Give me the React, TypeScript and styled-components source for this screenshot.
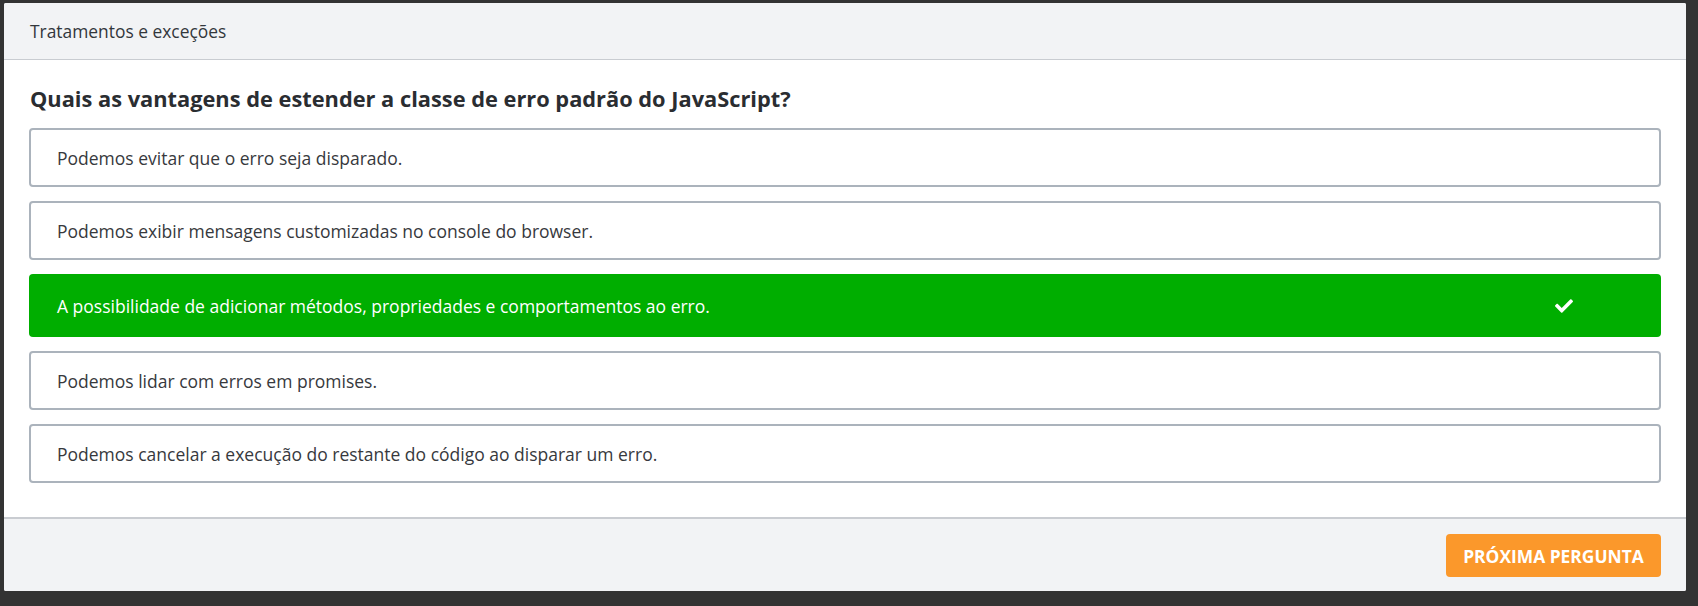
import React from "react";
import styled, { createGlobalStyle } from "styled-components";

const Global = createGlobalStyle`
  html, body { margin: 0; padding: 0; background: #333333; }
  body { font-family: "Open Sans", "Noto Sans", sans-serif; }
  * { box-sizing: border-box; }
`;

const Page = styled.div`
  padding: 3px 12px 15px 4px;
  width: 1698px;
  height: 606px;
`;

const Card = styled.div`
  background: #ffffff;
  border-radius: 2px;
  overflow: hidden;
  display: flex;
  flex-direction: column;
`;

const Header = styled.div`
  height: 57px;
  background: #f2f3f5;
  border-bottom: 1px solid #c9ccd1;
  display: flex;
  align-items: center;
  padding: 0 26px;
  font-size: 17.4px;
  color: #33373c;
`;

const Body = styled.div`
  padding: 23px 25px 34px 25px;
  display: flex;
  flex-direction: column;
`;

const Question = styled.h2`
  margin: 0 0 14px 1px;
  font-size: 21.8px;
  font-weight: 700;
  color: #2a2d31;
  line-height: 31px;
`;

const Options = styled.div`
  display: flex;
  flex-direction: column;
  gap: 14px;
`;

const Option = styled.div<{ $correct?: boolean }>`
  height: ${(p) => (p.$correct ? "63px" : "59px")};
  border-radius: 4px;
  border: ${(p) => (p.$correct ? "none" : "2px solid #abb3bc")};
  background: ${(p) => (p.$correct ? "#00ae00" : "#ffffff")};
  color: ${(p) => (p.$correct ? "#ffffff" : "#37393d")};
  display: flex;
  align-items: center;
  justify-content: space-between;
  padding: 0 88px 0 ${(p) => (p.$correct ? "28px" : "26px")};
  font-size: 17.5px;
`;

const CheckIcon = styled.svg`
  width: 18px;
  height: 14px;
  fill: #ffffff;
`;

const Footer = styled.div`
  height: 74px;
  background: #f2f3f5;
  border-top: 2px solid #c9ccd1;
  display: flex;
  align-items: center;
  justify-content: flex-end;
  padding: 0 25px;
`;

const NextButton = styled.button`
  height: 43px;
  width: 215px;
  border: none;
  border-radius: 4px;
  background: #fb982b;
  color: #ffffff;
  font-family: "Open Sans", "Noto Sans", sans-serif;
  font-weight: 700;
  font-size: 17.4px;
  cursor: pointer;
  margin-top: 1px;
`;

const options = [
  { text: "Podemos evitar que o erro seja disparado." },
  { text: "Podemos exibir mensagens customizadas no console do browser." },
  { text: "A possibilidade de adicionar métodos, propriedades e comportamentos ao erro.", correct: true },
  { text: "Podemos lidar com erros em promises." },
  { text: "Podemos cancelar a execução do restante do código ao disparar um erro." },
];

export default function App() {
  return (
    <>
      <Global />
      <Page>
        <Card>
          <Header>Tratamentos e exceções</Header>
          <Body>
            <Question>Quais as vantagens de estender a classe de erro padrão do JavaScript?</Question>
            <Options>
              {options.map((o) => (
                <Option key={o.text} $correct={o.correct}>
                  <span>{o.text}</span>
                  {o.correct && (
                    <CheckIcon viewBox="0 0 512 380">
                      <path
                        transform="translate(0,-66)"
                        d="M173.898 439.404l-166.4-166.4c-9.997-9.997-9.997-26.206 0-36.204l36.203-36.204c9.997-9.998 26.207-9.998 36.204 0L192 312.69 432.095 72.596c9.997-9.997 26.207-9.997 36.204 0l36.203 36.204c9.997 9.997 9.997 26.206 0 36.204l-294.4 294.401c-9.998 9.997-26.207 9.997-36.204-.001z"
                      />
                    </CheckIcon>
                  )}
                </Option>
              ))}
            </Options>
          </Body>
          <Footer>
            <NextButton>PRÓXIMA PERGUNTA</NextButton>
          </Footer>
        </Card>
      </Page>
    </>
  );
}
